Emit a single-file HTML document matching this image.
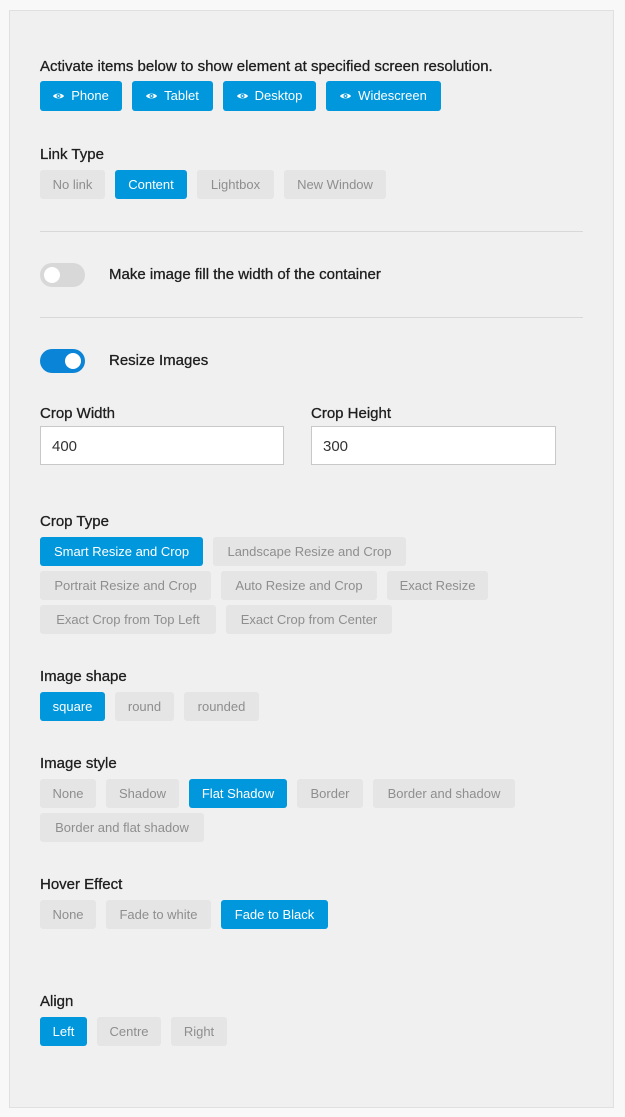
<!DOCTYPE html><html><head><style>
body{margin:0;width:625px;height:1117px;background:#f8f8f8;font-family:"Liberation Sans",Arial,sans-serif;position:relative;overflow:hidden}
.panel{position:absolute;left:9px;top:10px;width:603px;height:1096px;background:#f0f0f0;border:1px solid #e0e0e0}
.a{position:absolute}
.lbl{position:absolute;left:40px;font-size:15px;color:#1e1e1e;top:0;-webkit-text-stroke:0.3px #1e1e1e}
.b{position:absolute;height:29px;line-height:29px;font-size:13px;border-radius:3px;text-align:center;background:#e5e5e5;color:#8e8e8e}
.on{background:#0097dd;color:#fff}
.tall{height:30px;line-height:30px}
.hr{position:absolute;left:40px;width:543px;height:1px;background:#d8d8d8}
.in{position:absolute;height:39px;background:#fff;border:1px solid #c8c8c8;box-sizing:border-box;padding-left:11px;line-height:40px;font-size:15px;color:#333}
.eye{display:inline-block;width:11px;height:8px;vertical-align:0px;margin-right:7px}
</style></head><body><div class="panel"></div>
<svg width="0" height="0" style="position:absolute"><defs><symbol id="e" viewBox="0 0 12 8"><path d="M0 4C2 0.5 10 0.5 12 4C10 7.5 2 7.5 0 4Z" fill="#fff"/><circle cx="6" cy="4" r="2.2" fill="#0097dd"/><circle cx="6" cy="4" r="1" fill="#fff"/></symbol></defs></svg>
<div class="lbl" style="top:58px">Activate items below to show element at specified screen resolution.</div>
<div class="b on tall" style="left:40px;top:81px;width:82px"><svg class="eye"><use href="#e"/></svg>Phone</div>
<div class="b on tall" style="left:132px;top:81px;width:81px"><svg class="eye"><use href="#e"/></svg>Tablet</div>
<div class="b on tall" style="left:223px;top:81px;width:93px"><svg class="eye"><use href="#e"/></svg>Desktop</div>
<div class="b on tall" style="left:326px;top:81px;width:115px"><svg class="eye"><use href="#e"/></svg>Widescreen</div>
<div class="lbl" style="top:146px">Link Type</div>
<div class="b" style="left:40px;top:170px;width:65px">No link</div>
<div class="b on" style="left:115px;top:170px;width:72px">Content</div>
<div class="b" style="left:197px;top:170px;width:77px">Lightbox</div>
<div class="b" style="left:284px;top:170px;width:102px">New Window</div>
<div class="hr" style="top:231px"></div>
<div class="a" style="left:40px;top:263px;width:45px;height:24px;border-radius:12px;background:#d8d8d8"><div class="a" style="left:4px;top:4px;width:16px;height:16px;border-radius:8px;background:#fff"></div></div>
<div class="lbl" style="left:109px;top:266px">Make image fill the width of the container</div>
<div class="hr" style="top:317px"></div>
<div class="a" style="left:40px;top:349px;width:45px;height:24px;border-radius:12px;background:#0a84d6"><div class="a" style="left:25px;top:4px;width:16px;height:16px;border-radius:8px;background:#fff"></div></div>
<div class="lbl" style="left:109px;top:352px">Resize Images</div>
<div class="lbl" style="top:405px">Crop Width</div>
<div class="lbl" style="left:311px;top:405px">Crop Height</div>
<div class="in" style="left:40px;top:426px;width:244px">400</div>
<div class="in" style="left:311px;top:426px;width:245px">300</div>
<div class="lbl" style="top:513px">Crop Type</div>
<div class="b on" style="left:40px;top:537px;width:163px">Smart Resize and Crop</div>
<div class="b" style="left:213px;top:537px;width:193px">Landscape Resize and Crop</div>
<div class="b" style="left:40px;top:571px;width:171px">Portrait Resize and Crop</div>
<div class="b" style="left:221px;top:571px;width:156px">Auto Resize and Crop</div>
<div class="b" style="left:387px;top:571px;width:101px">Exact Resize</div>
<div class="b" style="left:40px;top:605px;width:176px">Exact Crop from Top Left</div>
<div class="b" style="left:226px;top:605px;width:166px">Exact Crop from Center</div>
<div class="lbl" style="top:668px">Image shape</div>
<div class="b on" style="left:40px;top:692px;width:65px">square</div>
<div class="b" style="left:115px;top:692px;width:59px">round</div>
<div class="b" style="left:184px;top:692px;width:75px">rounded</div>
<div class="lbl" style="top:755px">Image style</div>
<div class="b" style="left:40px;top:779px;width:56px">None</div>
<div class="b" style="left:106px;top:779px;width:73px">Shadow</div>
<div class="b on" style="left:189px;top:779px;width:98px">Flat Shadow</div>
<div class="b" style="left:297px;top:779px;width:66px">Border</div>
<div class="b" style="left:373px;top:779px;width:142px">Border and shadow</div>
<div class="b" style="left:40px;top:813px;width:164px">Border and flat shadow</div>
<div class="lbl" style="top:876px">Hover Effect</div>
<div class="b" style="left:40px;top:900px;width:56px">None</div>
<div class="b" style="left:106px;top:900px;width:105px">Fade to white</div>
<div class="b on" style="left:221px;top:900px;width:107px">Fade to Black</div>
<div class="lbl" style="top:993px">Align</div>
<div class="b on" style="left:40px;top:1017px;width:47px">Left</div>
<div class="b" style="left:97px;top:1017px;width:64px">Centre</div>
<div class="b" style="left:171px;top:1017px;width:56px">Right</div>
</body></html>
